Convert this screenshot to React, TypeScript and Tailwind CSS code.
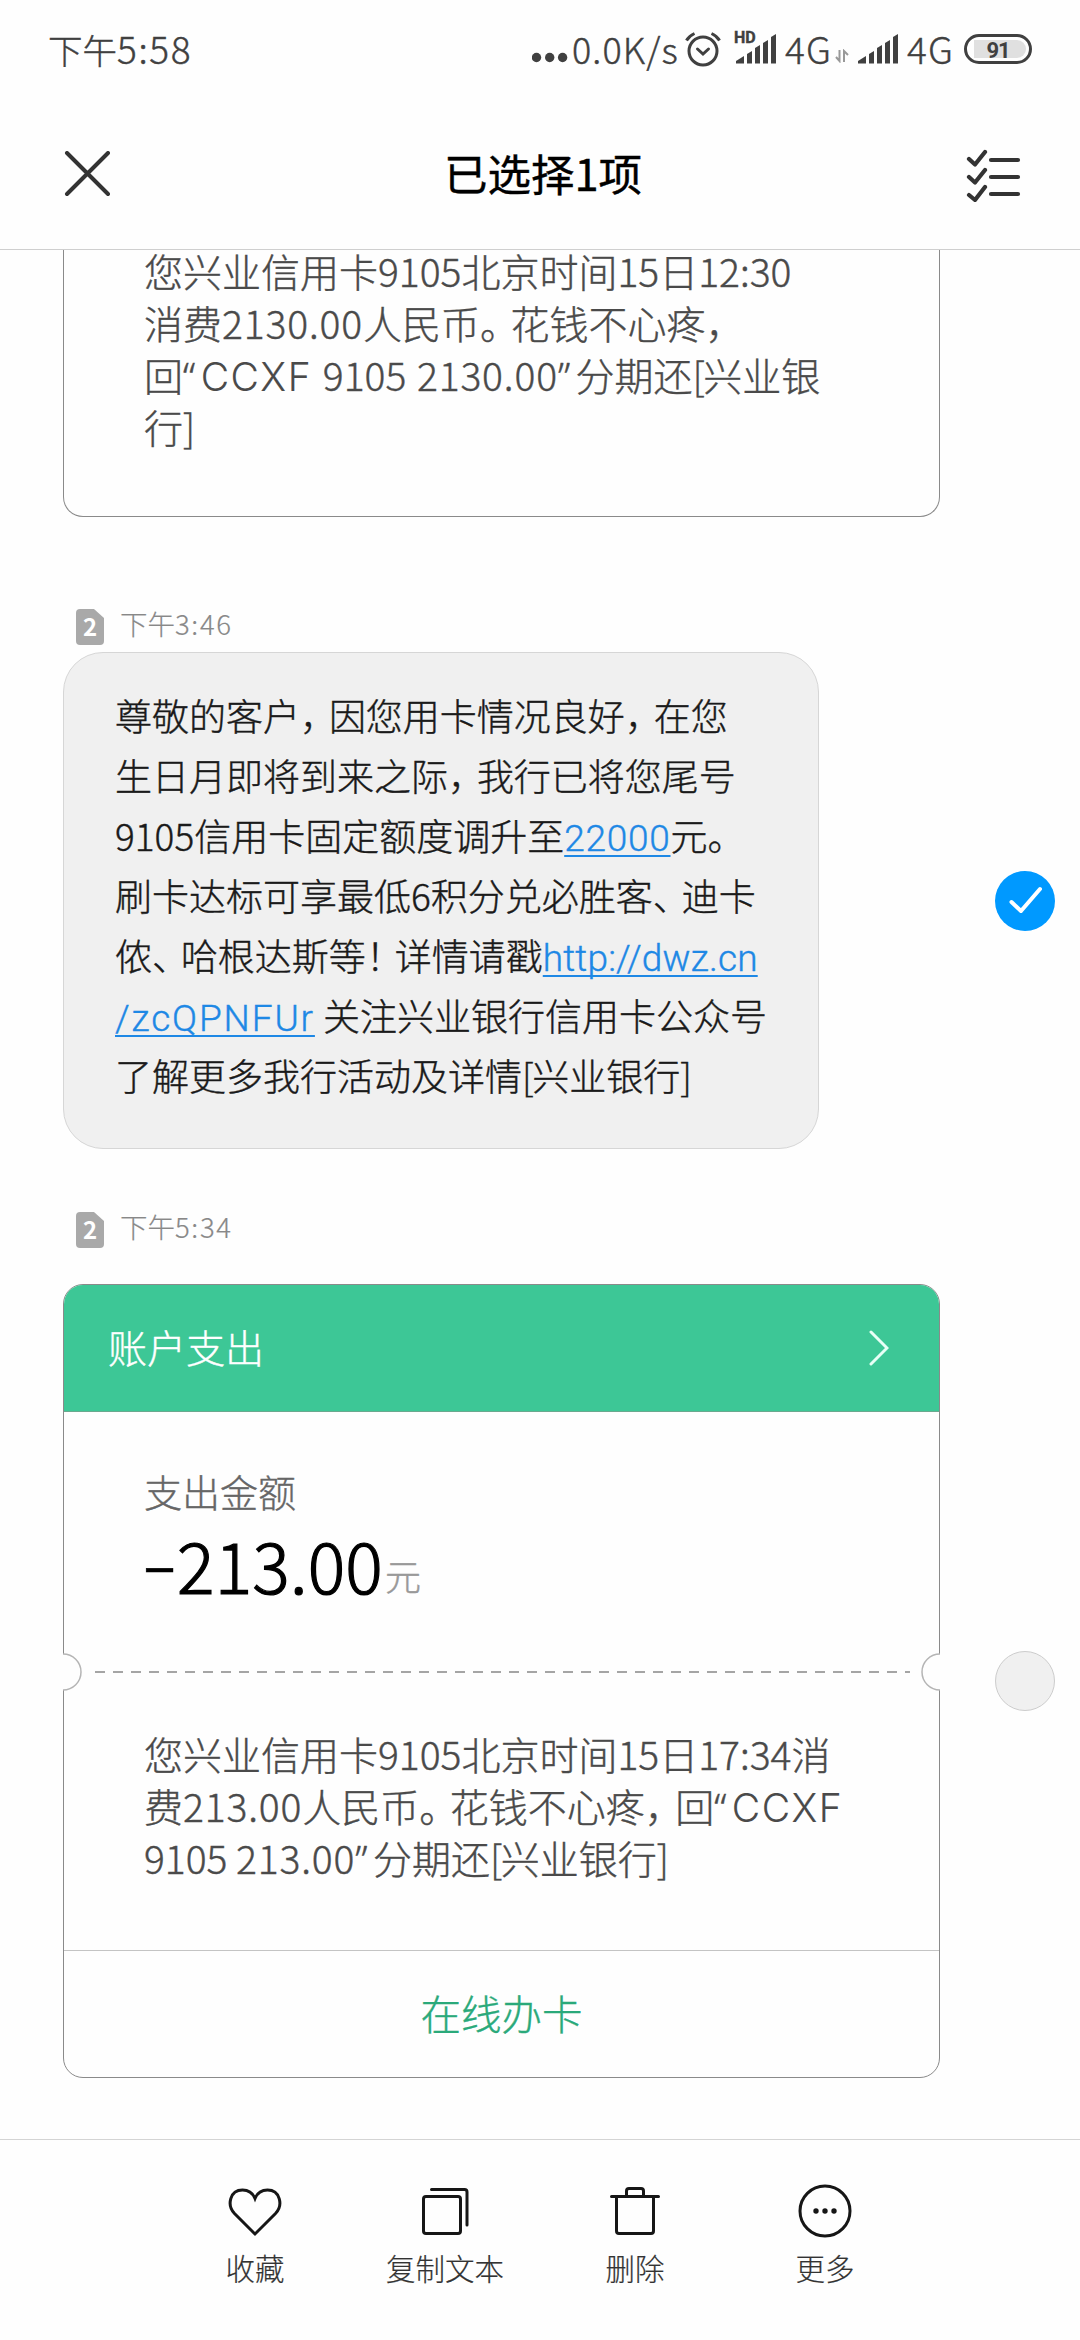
import { FC, ReactNode } from "react";

interface TextProps {
    text: string
}

interface ActionProps {
    label: string
    icon: ReactNode
}

// Full-width punctuation is set tighter than the characters around it
const Text:FC<TextProps> = ({ text }) => (
  <>
    {text.split(/([，。、！]|[“”]|[[\]]|[A-Z]+|\d+\.\d+)/).map((part, i) => {
      if (/^[，。、！]$/.test(part)) {
        return <span key={i} className="tracking-[-0.22em]">{part}</span>;
      }
      if (/^[“”]$/.test(part)) {
        return <span key={i} className="font-['Noto_Sans'] tracking-[0.14em]">{part}</span>;
      }
      if (/^[[\]]$/.test(part)) {
        return <span key={i} className="tracking-[-0.04em]">{part}</span>;
      }
      if (/^[A-Z]+$/.test(part)) {
        return <span key={i} className="font-['Inter'] tracking-[0.04em] [-webkit-text-stroke-width:0.1px]">{part}</span>;
      }
      if (/^\d+\.\d+$/.test(part)) {
        return <span key={i} className="tracking-[0.022em]">{part}</span>;
      }
      return part;
    })}
  </>
);

const Signal:FC = () => (
  <svg width="41" height="30" viewBox="0 0 41 30" fill="#404040">
    <path d="M0 29.5 L0 27 L8 22 V29.5 Z" />
    <path d="M11 29.5 V20 L16 17 V29.5 Z" />
    <path d="M19 29.5 V14 L24 11 V29.5 Z" />
    <path d="M27 29.5 V9 L32 6 V29.5 Z" />
    <path d="M35 29.5 V3 L40 0 V29.5 Z" />
  </svg>
);

const StatusBar:FC = () => (
  <div className="flex h-[98px] items-center text-[#404040]">
    <div className="ml-12 h-[52px] w-[200px] text-[34.5px] leading-[50px]">下午<span className="text-[37px] tracking-[0.045em]">5:58</span></div>
    <div className="ml-[284px] flex items-center">
      <svg width="36" height="30" viewBox="0 0 36 30" fill="#404040">
        <circle cx="4.5" cy="23.5" r="4.7" />
        <circle cx="17.7" cy="23.5" r="4.7" />
        <circle cx="30.6" cy="23.5" r="4.7" />
      </svg>
      <span className="mb-[2px] ml-1 w-[109px] text-[36px] leading-[50px] tracking-[0.03em]">0.0K/s</span>
      <svg className="ml-1" width="36" height="36" viewBox="0 0 36 36" fill="none" stroke="#404040" strokeWidth="3">
        <circle cx="18" cy="20" r="14" />
        <path d="M12.5 18 L18 23 L23.5 18" strokeLinecap="round" />
        <path d="M1.5 9.5 Q4 5 9.5 2.5 M34.5 9.5 Q32 5 26.5 2.5" />
      </svg>
      <div className="relative ml-[15px]">
        <span className="absolute -top-[4px] -left-[2px] bg-[#fefefe] font-['Roboto'] text-[16px] leading-[15px] font-bold">HD</span>
        <Signal />
      </div>
      <span className="mb-[2px] ml-2 w-[50px] text-[37px] leading-[50px] tracking-[0.03em]">4G</span>
      <svg className="mt-[14px]" width="14" height="14" viewBox="0 0 14 14" fill="none" stroke="#999" strokeWidth="2">
        <path d="M1 8 L4.5 12 V1 M9 13 V2 L13 6" />
      </svg>
      <div className="ml-[9px]"><Signal /></div>
      <span className="mb-[2px] ml-2 w-[50px] text-[37px] leading-[50px] tracking-[0.03em]">4G</span>
      <div className="ml-[7px] flex h-[30px] w-[68px] items-center rounded-full border-[3px] border-[#404040] p-[3px]">
        <div className="ml-1 flex h-full flex-1 items-center justify-center rounded-r-full bg-[#e0e0e0] pt-[2px] pr-1 font-['Roboto'] text-[22px] font-bold tracking-[-0.05em] [-webkit-text-stroke-width:0]">91</div>
      </div>
    </div>
  </div>
);

const Header:FC = () => (
  <div className="flex h-[152px] items-center justify-between border-b border-[#cfcfcf] pr-[58px] pl-16">
    <svg width="56" height="46" viewBox="0 0 56 46" fill="none" stroke="#333" strokeWidth="4" strokeLinecap="round">
      <path d="M3 2 L44 43 M44 2 L3 43" />
    </svg>
    <div className="mb-[2px] text-[43.5px] leading-[60px] font-normal text-black">已选择1项</div>
    <svg width="56" height="56" viewBox="0 0 56 56" fill="none" stroke="#333" strokeWidth="4.2" strokeLinecap="round" strokeLinejoin="round">
      <path d="M3 13 L9 18.5 L19 6 M25 14 H52" />
      <path d="M3 31 L9 36.5 L19 24 M25 31 H52" />
      <path d="M3 49 L9 54 L19 41 M25 48 H52" />
    </svg>
  </div>
);

const Stamp:FC<{ time: string }> = ({ time }) => (
  <div className="ml-[76px] flex h-[44px] items-center text-[27.5px] text-[#888] [-webkit-text-stroke-width:0.2px]">
    <svg className="mt-1" width="28" height="36" viewBox="0 0 28 36">
      <path d="M4 0 H18 L28 9 V32 Q28 36 24 36 H4 Q0 36 0 32 V4 Q0 0 4 0 Z" fill="#a9a9a9" />
      <text x="14" y="27" fontSize="24" fontWeight="700" textAnchor="middle" fill="#fff" stroke="none">2</text>
    </svg>
    <span className="mb-[4px] ml-[16px] leading-[40px]">下午<span className="tracking-[0.06em]">{time}</span></span>
  </div>
);

const Notch:FC<{ className: string }> = ({ className }) => (
  <svg className={className} width="20" height="38" viewBox="0 0 20 38">
    <rect x="0" y="1" width="2" height="36" fill="#fefefe" />
    <path d="M0 1 A18 18 0 0 1 0 37" fill="none" stroke="#b5b5b5" strokeWidth="1.5" />
  </svg>
);

const ExpenseCard:FC = () => (
  <div className="relative ml-[63px]">
    <div className="h-[794px] w-[877px] overflow-hidden rounded-[20px] border border-[#8a8a8a]">
      <div className="flex h-[127px] items-center justify-between border-b border-[#6aa88e] bg-[#3dc796] pr-[50px] pl-[44px] text-[39px] text-white">
        <span className="mb-[5px] leading-[56px]">账户支出</span>
        <svg width="20" height="36" viewBox="0 0 20 36" fill="none" stroke="#e8fff6" strokeWidth="3" strokeLinecap="round">
          <path d="M2 2 L18 18 L2 34" />
        </svg>
      </div>
      <div className="h-[259px] pt-[51px] pl-[80px]">
        <div className="h-[57px] text-[38px] leading-[56px] text-[#666]">支出金额</div>
        <div className="flex h-[88px] items-start text-black">
          <span className="relative top-[3px] w-[33px] text-[56px] leading-[88px] font-normal">−</span>
          <span className="text-[70px] leading-[88px] tracking-[0.003em] [-webkit-text-stroke-width:1.2px]">213.00</span>
          <span className="mt-[11px] ml-[2px] text-[36px] leading-[88px] text-[#999]">元</span>
        </div>
      </div>
      <svg className="ml-[31px]" width="815" height="2" viewBox="0 0 815 2">
        <path d="M0 1 H815" stroke="#888" strokeWidth="1.5" strokeDasharray="10 8" />
      </svg>
      <div className="h-[277px] pt-[54px] pl-[80px] text-[39px] leading-[52px] whitespace-nowrap text-[#4a4a4a]">
        <div className="h-[52px]"><Text text="您兴业信用卡9105北京时间15日17:34消" /></div>
        <div className="h-[52px]"><Text text="费213.00人民币。花钱不心疼，回“CCXF" /></div>
        <div className="h-[52px]"><Text text="9105 213.00”分期还[兴业银行]" /></div>
      </div>
      <div className="flex h-[128px] items-center justify-center border-t border-[#c4c4c4] pb-[3px] text-[40.5px] text-[#2aa97a]">
        在线办卡
      </div>
    </div>
    <Notch className="absolute top-[369px] left-0" />
    <Notch className="absolute top-[369px] right-0 rotate-180" />
  </div>
);

const Action:FC<ActionProps> = ({ label, icon }) => (
  <div className="flex w-[190px] flex-col items-center">
    {icon}
    <span className="mt-[6px] text-[29.5px] leading-[44px] text-[#333] [-webkit-text-stroke-width:0.2px]">{label}</span>
  </div>
);

const BottomBar:FC = () => (
  <div className="flex h-[201px] justify-center border-t border-[#d4d4d4] pt-[43px]">
    <Action label="收藏" icon={
      <svg width="56" height="56" viewBox="0 0 56 56" fill="none" stroke="#161616" strokeWidth="3">
        <path d="M28 51 L7.5 30.5 C-0.5 22 3 7 15.5 7 C21.5 7 26 10.5 28 15.5 C30 10.5 34.5 7 40.5 7 C53 7 56.5 22 48.5 30.5 Z" />
      </svg>
    } />
    <Action label="复制文本" icon={
      <svg width="56" height="56" viewBox="0 0 56 56" fill="none" stroke="#161616" strokeWidth="3" strokeLinecap="round">
        <rect x="6.5" y="13.5" width="37" height="37" rx="2.5" />
        <path d="M14.5 6.5 H47.5 Q50 6.5 50 9 V42" />
      </svg>
    } />
    <Action label="删除" icon={
      <svg width="56" height="56" viewBox="0 0 56 56" fill="none" stroke="#161616" strokeWidth="3" strokeLinecap="round">
        <path d="M4.5 13.5 H51.5 M9.5 14 V48 Q9.5 50.5 12 50.5 H44 Q46.5 50.5 46.5 48 V14" />
        <path d="M19.5 13 V8 Q19.5 5.5 22 5.5 H34 Q36.5 5.5 36.5 8 V13" />
      </svg>
    } />
    <Action label="更多" icon={
      <svg width="56" height="56" viewBox="0 0 56 56" fill="none" stroke="#161616" strokeWidth="3">
        <circle cx="28" cy="28" r="25" />
        <g fill="#161616" stroke="none">
          <circle cx="19" cy="28" r="2.7" />
          <circle cx="28" cy="28" r="2.7" />
          <circle cx="37" cy="28" r="2.7" />
        </g>
      </svg>
    } />
  </div>
);

const Link:FC<{ children: string, className: string }> = ({ children, className }) => (
  <span className={`font-['Roboto'] text-[#1e88e5] underline decoration-2 underline-offset-[4px] [text-decoration-skip-ink:none] ${className}`}>{children}</span>
);

const App:FC = () => {
  return (
    <div className="flex h-[2340px] w-[1080px] flex-col overflow-hidden bg-[#fefefe] font-['Noto_Sans_CJK_SC','Noto_Sans',sans-serif] font-light [-webkit-text-stroke-width:0.4px]">
      <StatusBar />
      <Header />

      <div className="flex h-[1889px] flex-col">
        <div className="ml-[63px] h-[267px] w-[877px] rounded-b-[20px] border border-t-0 border-[#8a8a8a] pl-[80px] text-[39px] leading-[52px] whitespace-nowrap text-[#4a4a4a]">
          <div className="-mt-[6px] h-[52px]"><Text text="您兴业信用卡9105北京时间15日12:30" /></div>
          <div className="h-[52px]"><Text text="消费2130.00人民币。花钱不心疼，" /></div>
          <div className="h-[52px] [word-spacing:2px]"><Text text="回“CCXF 9105 2130.00”分期还[兴业银" /></div>
          <div className="h-[52px]"><Text text="行]" /></div>
        </div>

        <div className="mt-[86px]"><Stamp time="3:46" /></div>
        <div className="mt-[5px] flex items-center">
          <div className="ml-[63px] h-[497px] w-[756px] rounded-[40px] border border-[#d6d6d6] bg-[#f0f0f0] pt-[32px] pl-[51px] text-[37px] leading-[60px] whitespace-nowrap text-[#1a1a1a]">
            <div className="h-[60px]"><Text text="尊敬的客户，因您用卡情况良好，在您" /></div>
            <div className="h-[60px]"><Text text="生日月即将到来之际，我行已将您尾号" /></div>
            <div className="h-[60px]">9105信用卡固定额度调升至<Link className="tracking-[0.02em]">22000</Link><Text text="元。" /></div>
            <div className="h-[60px]"><Text text="刷卡达标可享最低6积分兑必胜客、迪卡" /></div>
            <div className="h-[60px]"><Text text="侬、哈根达斯等！详情请戳" /><Link className="tracking-[0.005em]">http://dwz.cn</Link></div>
            <div className="h-[60px]"><Link className="tracking-[0.05em]">/zcQPNFUr</Link> 关注兴业银行信用卡公众号</div>
            <div className="h-[60px]"><Text text="了解更多我行活动及详情[兴业银行]" /></div>
          </div>
          <svg className="ml-[176px]" width="60" height="60" viewBox="0 0 60 60" fill="none">
            <circle cx="30" cy="30" r="30" fill="#0099ff" />
            <path d="M16.5 31 L26 40 L45 18" stroke="#fff" strokeWidth="4" strokeLinecap="round" strokeLinejoin="round" />
          </svg>
        </div>

        <div className="mt-[57px]"><Stamp time="5:34" /></div>
        <div className="mt-[34px] flex items-center">
          <ExpenseCard />
          <div className="ml-[55px] h-[60px] w-[60px] rounded-full border border-[#cccccc] bg-[#f0f0f0]" />
        </div>
      </div>

      <BottomBar />
    </div>
  )
}

export default App
